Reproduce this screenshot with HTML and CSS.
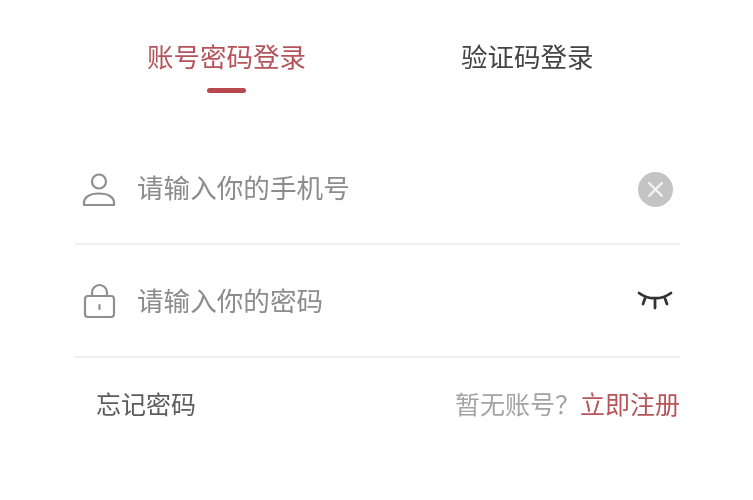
FILE: index.html
```html
<!DOCTYPE html>
<html lang="zh-CN">
<head>
    <meta charset="UTF-8">
    <meta name="viewport" content="width=device-width, initial-scale=1.0">
    <title>账号密码登录</title>
    <link rel="stylesheet" href="styles.css">
</head>
<body>
    <div class="login">
        <div class="tabs">
            <div class="tab active">账号密码登录</div>
            <div class="tab">验证码登录</div>
        </div>

        <div class="field">
            <svg class="field-icon user-icon" viewBox="0 0 36 36" width="36" height="36" fill="none" stroke="#8f8f8f" stroke-width="2.2">
                <circle cx="18" cy="9.500" r="7"/>
                <path d="M3 33v-2.500C3 25 9 21.500 18 21.500S33 25 33 30.500V33z" stroke-linejoin="round"/>
            </svg>
            <span class="placeholder">请输入你的手机号</span>
            <span class="clear-btn">
                <svg viewBox="0 0 16 16" width="17" height="17" stroke="#f4f4f4" stroke-width="2" stroke-linecap="round">
                    <path d="M2 2l12 12M14 2L2 14"/>
                </svg>
            </span>
        </div>

        <div class="field">
            <svg class="field-icon" viewBox="0 0 36 36" width="36" height="36" fill="none" stroke="#8f8f8f" stroke-width="2.2">
                <rect x="4" y="13" width="29" height="21" rx="3"/>
                <path d="M11 13V9.500a7.500 7.500 0 0 1 15 0V13"/>
                <path d="M18.500 22v4" stroke-linecap="round"/>
            </svg>
            <span class="placeholder">请输入你的密码</span>
            <svg class="eye" viewBox="0 0 36 20" width="36" height="20" fill="none" stroke="#333" stroke-width="2.800" stroke-linecap="round">
                <path d="M2 2c9 7 23 7 32 0"/>
                <path d="M8 7.500L6 13M18 9.500V17M28 7.500l2 5.500"/>
            </svg>
        </div>

        <div class="links">
            <span class="forgot">忘记密码</span>
            <span class="signup">暂无账号？<span class="signup-link">立即注册</span></span>
        </div>
    </div>
</body>
</html>
```

FILE: styles.css
```css
* {
    margin: 0;
    padding: 0;
    box-sizing: border-box;
}

body {
    font-family: "Noto Sans CJK SC", "Noto Sans", sans-serif;
    background: #fff;
    color: #4a4a4a;
}

.login {
    width: 753px;
    height: 500px;
    padding: 0 73px 0 75px;
    filter: blur(0.5px);
}

.tabs {
    display: flex;
    height: 132px;
    padding-top: 36px;
}

.tab {
    font-size: 26.500px;
    line-height: 40px;
    color: #444;
    position: relative;
    margin-left: 155px;
}

.tab.active {
    color: #b4545a;
    margin-left: 72px;
}

.tab.active::after {
    content: "";
    position: absolute;
    left: 60px;
    top: 52px;
    width: 39px;
    height: 5px;
    border-radius: 3px;
    background: #b8474e;
}

.field {
    display: flex;
    align-items: center;
    height: 113px;
    padding: 0 7px 0 6px;
    border-bottom: 2px solid #efefef;
}

.field-icon {
    flex: none;
    margin-right: 20px;
}

.user-icon {
    margin-top: 4px;
}

.placeholder {
    flex: 1;
    font-size: 26.600px;
    padding-bottom: 3px;
    color: #8c8c8c;
}

.clear-btn {
    display: flex;
    align-items: center;
    justify-content: center;
    width: 35px;
    height: 35px;
    margin-top: 4px;
    border-radius: 50%;
    background: #c4c4c4;
}

.eye {
    flex: none;
}

.links {
    display: flex;
    justify-content: space-between;
    align-items: center;
    padding: 25px 0 0 21px;
    font-size: 25px;
    line-height: 40px;
}

.forgot {
    color: #5c5c5c;
}

.signup {
    color: #a3a3a3;
}

.signup-link {
    color: #b8545a;
}
```
